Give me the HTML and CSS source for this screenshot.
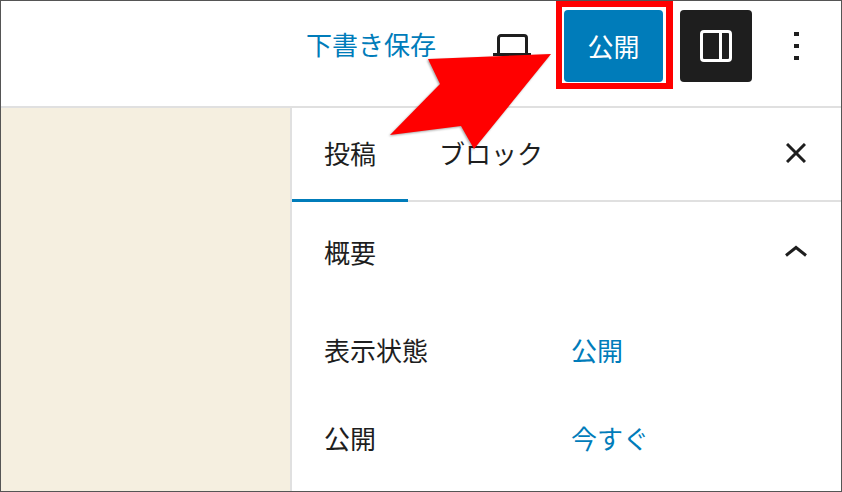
FILE: index.html
```html
<!DOCTYPE html>
<html lang="ja">
<head>
<meta charset="utf-8">
<title>公開</title>
<link rel="stylesheet" href="styles.css">
</head>
<body>
<div class="frame">
  <header class="topbar">
    <span class="draft">下書き保存</span>
    <svg class="preview" width="38" height="22" viewBox="0 0 38 22"><path d="M5.500 20V4a2.500 2.500 0 0 1 2.500-2.500h23a2.500 2.500 0 0 1 2.500 2.500V20" fill="none" stroke="#1e1e1e" stroke-width="3"/><rect x="0" y="19" width="38" height="3" fill="#1e1e1e"/></svg>
    <button class="publish">公開</button>
    <button class="settings">
      <svg width="32" height="32" viewBox="0 0 32 32"><rect x="1.500" y="1.500" width="29" height="29" rx="2.500" fill="none" stroke="#fff" stroke-width="3"/><rect x="19" y="2" width="3" height="28" fill="#fff"/></svg>
    </button>
    <div class="more"><i></i><i></i><i></i></div>
  </header>
  <div class="main">
    <div class="canvas"></div>
    <aside class="sidebar">
      <div class="tabs">
        <span class="tab active">投稿</span>
        <span class="tab wide">ブロック</span>
        <svg class="close" width="20" height="20" viewBox="0 0 20 20"><path d="M1 1L19 19M19 1L1 19" stroke="#1e1e1e" stroke-width="3" fill="none"/></svg>
      </div>
      <div class="panel-head">
        <span>概要</span>
        <svg class="chevron" width="22" height="12" viewBox="0 0 22 12"><path d="M1 10.500L11 2.500L21 10.500" stroke="#1e1e1e" stroke-width="3" fill="none"/></svg>
      </div>
      <div class="row"><span class="label">表示状態</span><span class="value">公開</span></div>
      <div class="row"><span class="label">公開</span><span class="value">今すぐ</span></div>
    </aside>
  </div>
  <div class="callout"></div>
  <svg class="arrow" width="842" height="492" viewBox="0 0 842 492"><polygon points="551,54 428,59 440,84 390,135 461,126 474,149" fill="#ff0000"/></svg>
</div>
</body>
</html>
```
FILE: styles.css
```css
* { box-sizing: border-box; }
html, body { margin: 0; padding: 0; }
body { width: 842px; height: 492px; overflow: hidden; background: #fff; font-family: "Noto Sans CJK JP", "Noto Sans", sans-serif; color: #1e1e1e; }
.frame { position: relative; width: 842px; height: 492px; border: 1px solid #555; display: flex; flex-direction: column; overflow: hidden; }
.topbar { height: 107px; flex: none; border-bottom: 2px solid #e0e0e0; display: flex; align-items: flex-start; padding-top: 9px; }
.draft { margin-left: 305px; width: 130px; height: 72px; line-height: 68px; font-size: 26px; color: #007cba; white-space: nowrap; }
.preview { margin: 24px 0 0 57px; flex: none; }
.publish { margin-left: 33px; width: 99px; height: 72px; border: 0; border-radius: 4px; background: #007cba; color: #fff; font: 400 26px/72px "Noto Sans CJK JP", sans-serif; padding: 0; margin-right: 1px; }
.settings { margin-left: 16px; width: 72px; height: 72px; border: 0; border-radius: 4px; background: #1e1e1e; padding: 20px; display: flex; }
.more { margin: 22px 0 0 42px; display: flex; flex-direction: column; gap: 8px; }
.more i { display: block; width: 5px; height: 4px; background: #1e1e1e; }
.main { flex: 1; display: flex; min-height: 0; }
.canvas { width: 291px; flex: none; background: #f5efe0; border-right: 2px solid #e0e0e0; }
.sidebar { flex: 1; display: flex; flex-direction: column; }
.tabs { height: 94px; flex: none; border-bottom: 2px solid #e0e0e0; display: flex; align-items: stretch; padding-right: 35px; }
.tab { width: 116px; text-align: center; font-size: 26px; line-height: 90px; white-space: nowrap; }
.tab.wide { width: 166px; }
.tab.active { border-bottom: 3px solid #007cba; margin-bottom: -2px; height: 94px; }
.close { align-self: center; margin: -2px 0 0 auto; }
.panel-head { height: 103px; flex: none; display: flex; justify-content: space-between; align-items: center; padding: 0 34px 5px 32px; font-size: 26px; }
.row { height: 88px; flex: none; display: flex; align-items: center; padding-left: 32px; font-size: 26px; }
.label { width: 247px; }
.value { color: #007cba; }
.callout { position: absolute; left: 555px; top: -1px; width: 117px; height: 89px; border: solid #f00; border-width: 7px 7px 6px 6px; pointer-events: none; }
.arrow { position: absolute; left: -1px; top: -1px; filter: drop-shadow(-1px 1px 1px rgba(0,0,0,.35)); pointer-events: none; }
```
